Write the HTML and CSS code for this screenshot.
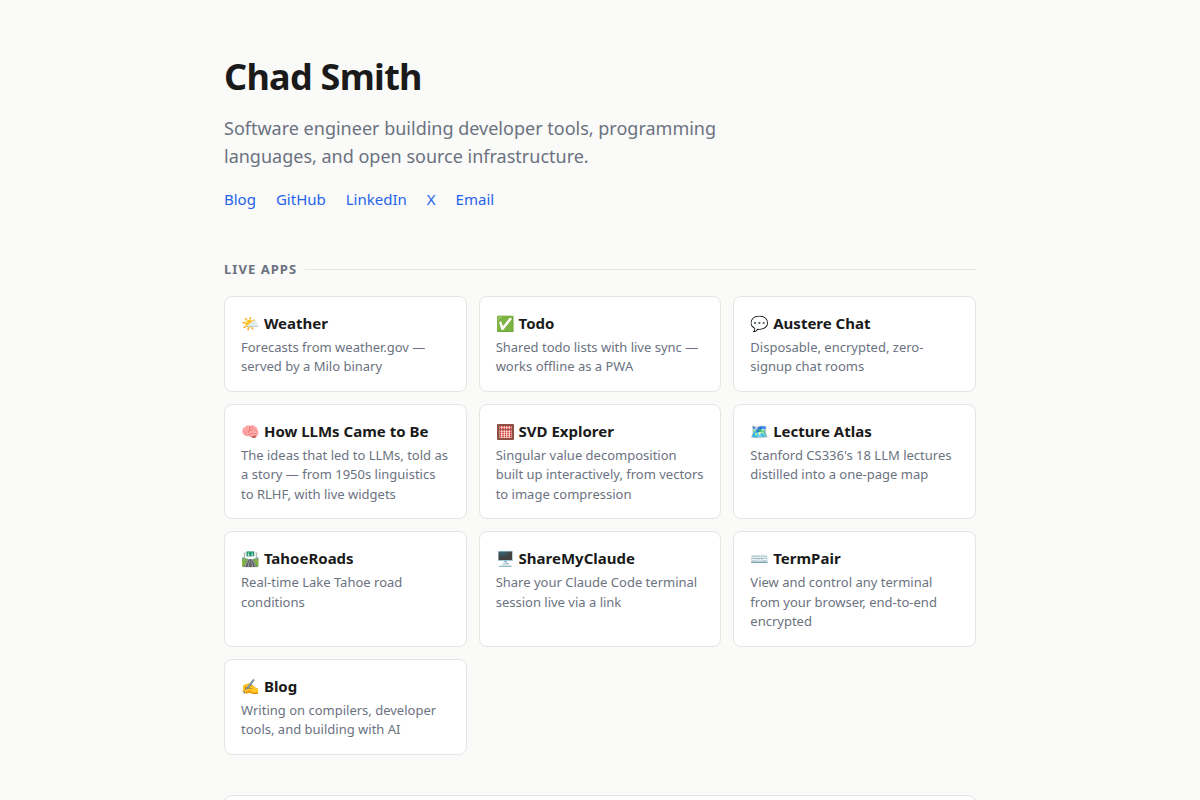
FILE: index.html
```html
<!DOCTYPE html>
<html lang="en">
<head>
    <meta charset="UTF-8">
    <meta name="viewport" content="width=device-width, initial-scale=1.0">
    <title>Chad Smith</title>
    <link rel="stylesheet" href="styles.css">
</head>
<body>
    <div class="container">
        <header>
            <h1>Chad Smith</h1>
            <p class="tagline">Software engineer building developer tools, programming languages, and open source infrastructure.</p>
            <nav class="links">
                <a href="#">Blog</a>
                <a href="#">GitHub</a>
                <a href="#">LinkedIn</a>
                <a href="#">X</a>
                <a href="#">Email</a>
            </nav>
        </header>

        <section>
            <h2>Live Apps</h2>
            <div class="grid">
                <a class="card" href="#">
                    <h3>🌤️ Weather</h3>
                    <p>Forecasts from weather.gov — served by a Milo binary</p>
                </a>
                <a class="card" href="#">
                    <h3>✅ Todo</h3>
                    <p>Shared todo lists with live sync — works offline as a PWA</p>
                </a>
                <a class="card" href="#">
                    <h3>💬 Austere Chat</h3>
                    <p>Disposable, encrypted, zero-signup chat rooms</p>
                </a>
                <a class="card" href="#">
                    <h3>🧠 How LLMs Came to Be</h3>
                    <p>The ideas that led to LLMs, told as a story — from 1950s linguistics to RLHF, with live widgets</p>
                </a>
                <a class="card" href="#">
                    <h3><svg class="abacus" viewBox="0 0 38 34" aria-hidden="true">
                        <rect x="2" width="34" height="32" rx="2" fill="#8d4f42"/>
                        <rect x="7" y="4" width="24" height="24" fill="#fbeeec"/>
                        <path d="M9 4v24M14 4v24M19 4v24M24 4v24M29 4v24" stroke="#cf2f2a" stroke-width="3" stroke-dasharray="3 1"/>
                        <path d="M7 11h24" stroke="#a05a4c" stroke-width="2"/>
                    </svg> SVD Explorer</h3>
                    <p>Singular value decomposition built up interactively, from vectors to image compression</p>
                </a>
                <a class="card" href="#">
                    <h3>🗺️ Lecture Atlas</h3>
                    <p>Stanford CS336's 18 LLM lectures distilled into a one-page map</p>
                </a>
                <a class="card" href="#">
                    <h3>🛣️ TahoeRoads</h3>
                    <p>Real-time Lake Tahoe road conditions</p>
                </a>
                <a class="card" href="#">
                    <h3>🖥️ ShareMyClaude</h3>
                    <p>Share your Claude Code terminal session live via a link</p>
                </a>
                <a class="card" href="#">
                    <h3>⌨️ TermPair</h3>
                    <p>View and control any terminal from your browser, end-to-end encrypted</p>
                </a>
                <a class="card" href="#">
                    <h3>✍️ Blog</h3>
                    <p>Writing on compilers, developer tools, and building with AI</p>
                </a>
            </div>
        </section>

        <section class="panel"></section>
    </div>
</body>
</html>
```

FILE: styles.css
```css
* {
    box-sizing: border-box;
    margin: 0;
    padding: 0;
}

body {
    font-family: "Noto Sans", sans-serif;
    background: #fafaf8;
    color: #1a1a1a;
    line-height: 1.6;
}

.container {
    max-width: 800px;
    margin: 0 auto;
    padding: 48px 24px;
}

header {
    margin-bottom: 48px;
}

h1 {
    font-size: 36px;
    font-weight: 700;
    letter-spacing: -0.02em;
    margin-bottom: 8px;
}

.tagline {
    max-width: 520px;
    font-size: 18px;
    line-height: 28px;
    color: #6b7280;
}

.links {
    display: flex;
    flex-wrap: wrap;
    gap: 20px;
    margin-top: 17px;
    font-size: 15px;
}

.links a {
    color: #2563eb;
    text-decoration: none;
}

.links a:hover {
    text-decoration: underline;
}

section {
    margin-bottom: 40px;
}

h2 {
    display: flex;
    align-items: center;
    gap: 8px;
    margin-bottom: 16px;
    font-size: 13px;
    font-weight: 700;
    line-height: 21px;
    letter-spacing: 0.08em;
    text-transform: uppercase;
    color: #6b7280;
}

/* rule that fills the rest of the heading line */
h2::after {
    content: "";
    flex: 1;
    height: 1px;
    background: #e5e5e5;
}

.grid {
    display: grid;
    grid-template-columns: repeat(3, 1fr);
    gap: 12px;
}

.card {
    display: block;
    padding: 14px 16px;
    border: 1px solid #e5e5e5;
    border-radius: 8px;
    background: #fff;
    color: inherit;
    text-decoration: none;
}

.card:hover {
    border-color: #2563eb;
}

.card h3 {
    margin-bottom: 3px;
    font-size: 15px;
    font-weight: 700;
    line-height: 24px;
}

.card p {
    font-size: 13px;
    line-height: 1.5;
    color: #6b7280;
}

.abacus {
    width: 19px;
    height: 17px;
    vertical-align: text-bottom;
}

.panel {
    min-height: 120px;
    border: 1px solid #e5e5e5;
    border-radius: 8px;
    background: #fff;
}

@media (max-width: 640px) {
    .grid {
        grid-template-columns: 1fr;
    }
}
```
